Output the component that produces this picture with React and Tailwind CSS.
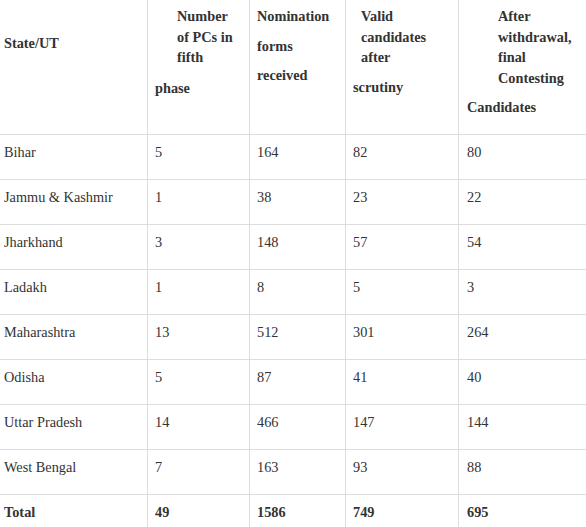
import React from "react";

const rows = [
  ["Bihar", "5", "164", "82", "80"],
  ["Jammu & Kashmir", "1", "38", "23", "22"],
  ["Jharkhand", "3", "148", "57", "54"],
  ["Ladakh", "1", "8", "5", "3"],
  ["Maharashtra", "13", "512", "301", "264"],
  ["Odisha", "5", "87", "41", "40"],
  ["Uttar Pradesh", "14", "466", "147", "144"],
  ["West Bengal", "7", "163", "93", "88"],
];

const pads = ["pl-[4px]", "pl-[7px]", "pl-[7px]", "pl-[7px]", "pl-[8px]"];

function Row({ cells, bold }) {
  return (
    <div className="grid grid-cols-[148px_102px_96px_113px_1fr] border-b border-[#dddddd] h-[45px]">
      {cells.map((c, i) => (
        <div
          key={i}
          className={`${pads[i]} pt-[7px] leading-[20px] ${i < 4 ? "border-r border-[#dddddd]" : ""} ${bold ? "font-bold" : ""}`}
        >
          {c}
        </div>
      ))}
    </div>
  );
}

export default function App() {
  return (
    <div
      className="w-[586px] h-[527px] overflow-hidden bg-white text-[#333333] text-[14.3px]"
      style={{ fontFamily: '"Liberation Serif", "Times New Roman", serif' }}
    >
      <div className="grid grid-cols-[148px_102px_96px_113px_1fr] border-b border-[#dddddd] h-[135px] font-bold">
        <div className="border-r border-[#dddddd] pl-[4px] pt-[33px] leading-[20px]">State/UT</div>
        <div className="border-r border-[#dddddd] pl-[7px] pt-[6px] leading-[20.5px]">
          <div className="pl-[22px]">
            <div>Number</div>
            <div>of PCs in</div>
            <div>fifth</div>
          </div>
          <div className="mt-[10px]">phase</div>
        </div>
        <div className="border-r border-[#dddddd] pl-[7px] pt-[2px] leading-[29.5px]">
          <div>Nomination</div>
          <div>forms</div>
          <div>received</div>
        </div>
        <div className="border-r border-[#dddddd] pl-[7px] pt-[6px] leading-[20.5px]">
          <div className="pl-[8px]">
            <div>Valid</div>
            <div>candidates</div>
            <div>after</div>
          </div>
          <div className="mt-[9.5px]">scrutiny</div>
        </div>
        <div className="pl-[8px] pt-[6px] leading-[20.67px]">
          <div className="pl-[31px]">
            <div>After</div>
            <div>withdrawal,</div>
            <div>final</div>
            <div>Contesting</div>
          </div>
          <div className="mt-[8px]">Candidates</div>
        </div>
      </div>
      {rows.map((r) => (
        <Row key={r[0]} cells={r} />
      ))}
      <Row cells={["Total", "49", "1586", "749", "695"]} bold />
    </div>
  );
}
